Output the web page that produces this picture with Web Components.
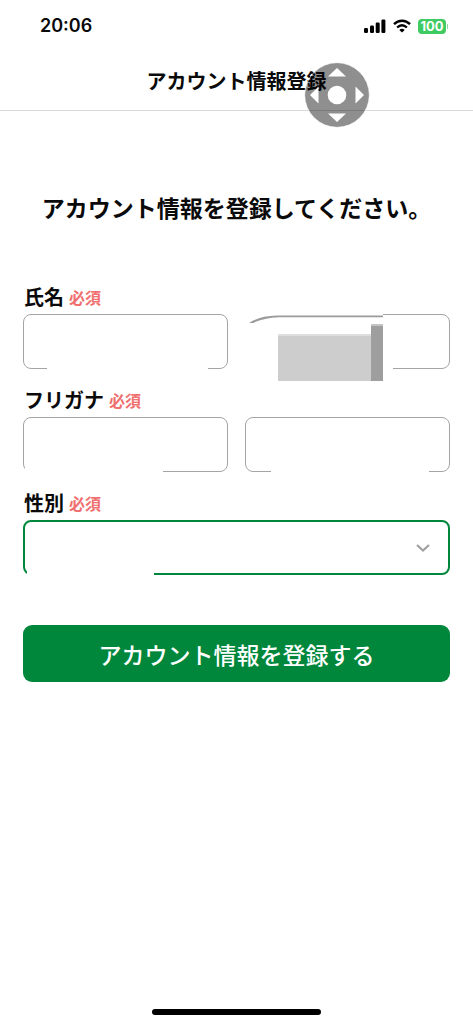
<!DOCTYPE html>
<html lang="ja">
<head>
<meta charset="utf-8">
<meta name="viewport" content="width=device-width, initial-scale=1">
<title>アカウント情報登録</title>
<style>
  body {
    margin: 0;
    background: #fff;
    color: #0a0a0a;
    font-family: "Noto Sans CJK JP", sans-serif;
    --green: #00873c;
    --line: #a4a4a4;
    --required: #f07070;
  }
</style>
</head>
<body>
<account-page>
  <status-bar slot="top" time="20:06" battery="100"></status-bar>
  <page-header slot="top">アカウント情報登録<touch-pad slot="floating"></touch-pad></page-header>
  <page-lead>アカウント情報を登録してください。</page-lead>
  <account-form></account-form>
  <home-indicator slot="bottom"></home-indicator>
</account-page>

<script>
class BaseElement extends HTMLElement {
  connectedCallback() {
    if (this.shadowRoot) return;
    this.attachShadow({ mode: "open" }).innerHTML =
      "<style>*{box-sizing:border-box}</style>" + this.render();
  }
}

customElements.define("account-page", class extends BaseElement {
  render() {
    return `
    <style>
      :host { display: flex; flex-direction: column; min-height: 100vh; }
      main { flex: 1; padding: 0 23px 24px; }
    </style>
    <slot name="top"></slot>
    <main><slot></slot></main>
    <slot name="bottom"></slot>`;
  }
});

customElements.define("status-bar", class extends BaseElement {
  render() {
    return `
    <style>
      :host {
        display: flex; align-items: center; justify-content: space-between;
        height: 52px; padding: 0 25px 0 40px;
        font-family: Inter, "Liberation Sans", sans-serif;
      }
      time { font-size: 18px; font-weight: 600; line-height: 24px; }
      .icons { display: flex; align-items: center; gap: 7px; }
      .battery { display: flex; align-items: center; gap: 1px; }
      .level {
        width: 28px; border-radius: 4px; background: #3ecb62; color: #fff;
        font-size: 13px; font-weight: 700; line-height: 15px; text-align: center;
      }
      .tip { width: 1px; height: 5px; background: #8fdca2; }
      svg { display: block; }
    </style>
    <time>${this.getAttribute("time")}</time>
    <div class="icons">
      <svg width="22" height="14" viewBox="0 0 22 14" aria-hidden="true">
        <rect x="0" y="9" width="4" height="5" rx="1.2"/>
        <rect x="6" y="6.5" width="4" height="7.5" rx="1.2"/>
        <rect x="11.7" y="3.5" width="4" height="10.5" rx="1.2"/>
        <rect x="17.4" y="0.5" width="4" height="13.5" rx="1.2"/>
      </svg>
      <svg width="18" height="14" viewBox="0 0 18 14" aria-hidden="true">
        <path d="M1 5.2C5.6.6 12.4.6 17 5.2" fill="none" stroke="#000" stroke-width="2.4"/>
        <path d="M4.1 8.5c3-2.8 6.8-2.8 9.8 0" fill="none" stroke="#000" stroke-width="2.3"/>
        <path d="M9 13.6 6.3 10.9c1.6-1.4 3.8-1.4 5.4 0z"/>
      </svg>
      <div class="battery"><span class="level">${this.getAttribute("battery")}</span><span class="tip"></span></div>
    </div>`;
  }
});

customElements.define("page-header", class extends BaseElement {
  render() {
    return `
    <style>
      :host {
        display: block; position: relative; padding: 14px 0;
        border-bottom: 1px solid #d9d9d9; text-align: center;
      }
      h1 { margin: 0; font-size: 20px; font-weight: 700; line-height: 30px; }
      .floating { position: absolute; top: 10px; right: 103px; }
    </style>
    <h1><slot></slot></h1>
    <div class="floating"><slot name="floating"></slot></div>`;
  }
});

customElements.define("touch-pad", class extends BaseElement {
  render() {
    return `
    <style>
      :host { display: block; width: 66px; height: 66px; }
      button { display: block; width: 100%; padding: 0; border: 0; background: none; }
      svg { display: block; }
    </style>
    <button type="button" aria-label="移動">
      <svg width="66" height="66" viewBox="0 0 66 66">
        <circle cx="33" cy="33" r="32.3" fill="#000" fill-opacity=".44" stroke="#fff" stroke-opacity=".6"/>
        <circle cx="33" cy="33" r="9.3" fill="#fff"/>
        <path d="M33 6l9 8.500H24zM33 60l9-8.500H24zM6 33l8.500-8.500v17zM60 33l-8.500-8.500v17z" fill="#fff"/>
      </svg>
    </button>`;
  }
});

customElements.define("page-lead", class extends BaseElement {
  render() {
    return `
    <style>
      :host { display: block; padding: 79px 0 60px; }
      p { margin: 0; font-size: 23px; font-weight: 700; line-height: 34px; text-align: center; white-space: nowrap; }
    </style>
    <p><slot></slot></p>`;
  }
});

/* White cover over the lower edge of a box; "from" and "to" are distances from its left and right sides. */
customElements.define("edge-cover", class extends BaseElement {
  render() {
    return `
    <style>
      :host {
        position: absolute; bottom: 0; height: 4px; background: #fff;
        left: ${this.getAttribute("from")}px; right: ${this.getAttribute("to")}px;
      }
    </style>`;
  }
});

customElements.define("privacy-block", class extends BaseElement {
  render() {
    return `
    <style>
      :host { position: absolute; left: 0; top: 0; }
      svg { display: block; }
    </style>
    <svg width="148" height="68" viewBox="0 0 148 68" aria-hidden="true">
      <path d="M0 0H138V50H148V68H0z" fill="#fff"/>
      <path d="M4 9Q14 2 32 1.500H138V3.200H34Q18 4 8 9z" fill="#9b9b9b"/>
      <path d="M33 20h93v47H33z" fill="#cdcdcd"/>
      <path d="M33 20h93v2H33z" fill="#dedede"/>
      <path d="M126 10h12v57h-12z" fill="#9e9e9e"/>
      <path d="M126 10h12v2h-12z" fill="#c4c4c4"/>
    </svg>`;
  }
});

customElements.define("form-field", class extends BaseElement {
  render() {
    const names = this.getAttribute("names").split(",");
    const label = this.getAttribute("label");
    const boxes = names.map((name, i) => `
      <div class="box">
        <input id="f${i}" name="${name}" type="text"${i ? ` aria-label="${label} ${i + 1}"` : ""} required>
        <slot name="cover${i}"></slot>
      </div>`).join("");
    const select = `
      <div class="box">
        <select id="f0" name="${names[0]}" required><option value=""></option><option>男性</option><option>女性</option></select>
        <svg width="14" height="8" viewBox="0 0 14 8" aria-hidden="true"><path d="M1 1l6 5.500L13 1" fill="none" stroke="#a0a0a0" stroke-width="2.200"/></svg>
        <slot name="cover0"></slot>
      </div>`;
    return `
    <style>
      :host { display: block; }
      label { display: flex; align-items: center; gap: 5px; padding-left: 1px; margin-bottom: 4px; line-height: 26px; }
      b { font-size: 20px; font-weight: 700; }
      em { font-size: 16px; font-weight: 700; font-style: normal; color: var(--required); }
      .row { display: flex; gap: 17px; }
      .box { position: relative; flex: 1; min-width: 0; }
      input, select {
        display: block; width: 100%; height: 55px; margin: 0; padding: 0 16px;
        border: 1px solid var(--line); border-radius: 8px; background: #fff;
        font: inherit; font-size: 18px; outline: 0; appearance: none;
      }
      select { border: 2px solid var(--green); }
      svg { position: absolute; right: 20px; top: 24px; pointer-events: none; }
    </style>
    <label for="f0"><b>${label}</b><em>必須</em></label>
    <div class="row">${this.hasAttribute("choice") ? select : boxes}</div>`;
  }
});

customElements.define("primary-button", class extends BaseElement {
  render() {
    return `
    <style>
      :host { display: block; }
      button {
        display: block; width: 100%; height: 57px; padding: 0; border: 0; border-radius: 9px;
        background: var(--green); color: #fff; font: inherit;
        font-size: 23px; font-weight: 500; line-height: 34px; cursor: pointer;
      }
    </style>
    <button type="submit"><slot></slot></button>`;
  }
});

customElements.define("account-form", class extends BaseElement {
  render() {
    return `
    <style>
      :host { display: block; }
      form { display: flex; flex-direction: column; gap: 18px; }
      primary-button { margin-top: 32px; }
    </style>
    <form>
      <form-field label="氏名" names="family,given">
        <edge-cover slot="cover0" from="24" to="20"></edge-cover>
        <privacy-block slot="cover1"></privacy-block>
      </form-field>
      <form-field label="フリガナ" names="family-kana,given-kana">
        <edge-cover slot="cover0" from="2" to="65"></edge-cover>
        <edge-cover slot="cover1" from="26" to="21"></edge-cover>
      </form-field>
      <form-field label="性別" names="gender" choice>
        <edge-cover slot="cover0" from="4" to="296"></edge-cover>
      </form-field>
      <primary-button>アカウント情報を登録する</primary-button>
    </form>`;
  }
});

customElements.define("home-indicator", class extends BaseElement {
  render() {
    return `
    <style>
      :host { display: flex; justify-content: center; padding: 8px 0 9px; }
      span { width: 169px; height: 6px; border-radius: 3px; background: #000; }
    </style>
    <span></span>`;
  }
});
</script>
</body>
</html>
